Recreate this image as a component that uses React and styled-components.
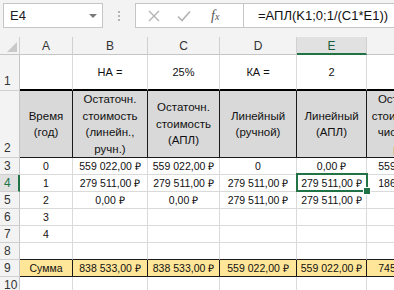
import React from "react";
import styled, { createGlobalStyle, css } from "styled-components";

const GlobalStyle = createGlobalStyle`
  html, body {
    margin: 0;
    padding: 0;
    width: 394px;
    height: 290px;
    overflow: hidden;
    background: #ffffff;
    font-family: "Liberation Sans", Arial, sans-serif;
  }
  * { box-sizing: border-box; }
`;

const Page = styled.div`
  width: 394px;
  height: 290px;
  overflow: hidden;
  display: flex;
  flex-direction: column;
`;

const FormulaBar = styled.div`
  height: 37px;
  flex: none;
  display: flex;
  align-items: flex-start;
  padding: 3px 0 0 3px;
  background: #f3f3f3;
`;

const NameBox = styled.div`
  width: 100px;
  height: 25px;
  background: #ffffff;
  border: 1px solid #c6c6c6;
  display: flex;
  align-items: center;
  justify-content: space-between;
  padding: 0 5px 0 6px;
  font-size: 13px;
  color: #222;
`;

const DropArrow = styled.span`
  width: 0;
  height: 0;
  border-left: 4px solid transparent;
  border-right: 4px solid transparent;
  border-top: 4px solid #7a7a7a;
`;

const Dots = styled.div`
  width: 32px;
  height: 25px;
  display: flex;
  flex-direction: column;
  align-items: center;
  justify-content: center;
  gap: 2px;
  & > span {
    width: 2px;
    height: 2px;
    background: #b5b5b5;
  }
`;

const FormulaBox = styled.div`
  flex: 1;
  height: 25px;
  background: #ffffff;
  border: 1px solid #c6c6c6;
  border-right: none;
  display: flex;
  align-items: center;
`;

const FxButtons = styled.div`
  width: 108px;
  height: 100%;
  display: flex;
  align-items: center;
  padding-left: 12px;
  gap: 17px;
  border-right: 1px solid #c6c6c6;
`;

const FxIcon = styled.span`
  font-family: "Liberation Serif", "Times New Roman", serif;
  font-style: italic;
  font-size: 14px;
  color: #555;
  margin-left: 3px;
  & > small {
    font-size: 10px;
  }
`;

const FormulaText = styled.div`
  padding-left: 14px;
  font-size: 13px;
  color: #111;
  white-space: nowrap;
`;

const Sheet = styled.div`
  display: grid;
  grid-template-columns: 20px 53px 75px 72px 77px 70px 85px;
  grid-template-rows: 18px 36px 67px repeat(8, 17px);
  width: 452px;
  font-size: 10.5px;
  color: #111;
`;

const Corner = styled.div`
  position: relative;
  background: #f3f3f3;
  border-right: 1px solid #d0d0d0;
  border-bottom: 1px solid #c6c6c6;
  display: flex;
  align-items: flex-end;
  justify-content: flex-end;
  padding: 0 2px 2px 0;
`;

const CornerTriangle = styled.span`
  width: 0;
  height: 0;
  border-left: 10px solid transparent;
  border-bottom: 10px solid #c9c9c9;
`;

const ColHeader = styled.div`
  background: ${(p) => (p.$selected ? "#e1e1e1" : "#f3f3f3")};
  border-right: 1px solid #d0d0d0;
  border-bottom: ${(p) => (p.$selected ? "2px solid #217346" : "1px solid #c6c6c6")};
  display: flex;
  align-items: center;
  justify-content: center;
  font-size: 12px;
  color: ${(p) => (p.$selected ? "#1d5e3a" : "#333")};
  padding-top: ${(p) => (p.$selected ? "1px" : "0")};
`;

const RowHeader = styled.div`
  background: ${(p) => (p.$selected ? "#e1e1e1" : "#f3f3f3")};
  border-right: ${(p) => (p.$selected ? "2px solid #217346" : "1px solid #c6c6c6")};
  border-bottom: 1px solid #d0d0d0;
  display: flex;
  align-items: ${(p) => (p.$tall ? "flex-end" : "center")};
  padding: ${(p) => (p.$tall ? "0 0 1px 4px" : "0 0 0 4px")};
  font-size: 12px;
  color: ${(p) => (p.$selected ? "#217346" : "#333")};
  line-height: 16px;
`;

const kinds = {
  plain: css`
    border-right: 1px solid #dadada;
    border-bottom: 1px solid #dadada;
  `,
  title: css`
    border-right: 1px solid #dadada;
    border-bottom: 2px solid #000;
    font-size: 11px;
  `,
  head: css`
    background: #d9d9d9;
    border-right: 1px solid #1a1a1a;
    border-bottom: 1px solid #1a1a1a;
    flex-direction: column;
    line-height: 16.5px;
    font-size: 11.5px;
  `,
  beforeSum: css`
    border-right: 1px solid #dadada;
    border-bottom: 1px solid #1a1a1a;
  `,
  sum: css`
    background: #ffe699;
    border-right: 1px solid #1a1a1a;
    border-bottom: 1px solid #1a1a1a;
  `,
};

const Cell = styled.div`
  position: relative;
  display: flex;
  align-items: center;
  justify-content: center;
  text-align: center;
  white-space: nowrap;
  overflow: ${(p) => (p.$selected ? "visible" : "hidden")};
  background: #ffffff;
  ${(p) => kinds[p.$kind || "plain"]}
  ${(p) =>
    p.$selected &&
    css`
      &::after {
        content: "";
        position: absolute;
        top: -2px;
        left: -1px;
        right: -2px;
        bottom: -1px;
        border: 2px solid #217346;
        z-index: 2;
      }
      &::before {
        content: "";
        position: absolute;
        right: -5px;
        bottom: -4px;
        width: 6px;
        height: 6px;
        background: #217346;
        border: 1px solid #ffffff;
        z-index: 3;
      }
    `}
`;

const Line = styled.span`
  display: block;
`;

const columns = ["A", "B", "C", "D", "E", "F"];

const rows = [
  { n: 1, kind: "title", tall: true, cells: ["", "НА =", "25%", "КА =", "2", ""] },
  {
    n: 2,
    kind: "head",
    tall: true,
    cells: [
      ["Время", "(год)"],
      ["Остаточн.", "стоимость", "(линейн.,", "ручн.)"],
      ["Остаточн.", "стоимость", "(АПЛ)"],
      ["Линейный", "(ручной)"],
      ["Линейный", "(АПЛ)"],
      ["Остаточная", "стоимость (по", "числам лет,", "ручн.)"],
    ],
  },
  { n: 3, cells: ["0", "559 022,00 ₽", "559 022,00 ₽", "0", "0,00 ₽", "559 022,00 ₽"] },
  {
    n: 4,
    selected: true,
    cells: ["1", "279 511,00 ₽", "279 511,00 ₽", "279 511,00 ₽", "279 511,00 ₽", "186 340,67 ₽"],
  },
  { n: 5, cells: ["2", "0,00 ₽", "0,00 ₽", "279 511,00 ₽", "279 511,00 ₽", ""] },
  { n: 6, cells: ["3", "", "", "", "", ""] },
  { n: 7, cells: ["4", "", "", "", "", ""] },
  { n: 8, kind: "beforeSum", cells: ["", "", "", "", "", ""] },
  {
    n: 9,
    kind: "sum",
    cells: ["Сумма", "838 533,00 ₽", "838 533,00 ₽", "559 022,00 ₽", "559 022,00 ₽", "745 362,67 ₽"],
  },
  { n: 10, cells: ["", "", "", "", "", ""] },
];

export default function App() {
  return (
    <Page>
      <GlobalStyle />
      <FormulaBar>
        <NameBox>
          <span>E4</span>
          <DropArrow />
        </NameBox>
        <Dots>
          <span />
          <span />
          <span />
        </Dots>
        <FormulaBox>
          <FxButtons>
            <svg width="12" height="12" viewBox="0 0 12 12">
              <path d="M1 1 L11 11 M11 1 L1 11" stroke="#b3b3b3" strokeWidth="1.4" fill="none" />
            </svg>
            <svg width="14" height="12" viewBox="0 0 14 12">
              <path d="M1 6.5 L5 10.5 L13 1.5" stroke="#b3b3b3" strokeWidth="1.6" fill="none" />
            </svg>
            <FxIcon>
              f<small>x</small>
            </FxIcon>
          </FxButtons>
          <FormulaText>=АПЛ(K1;0;1/(C1*E1))</FormulaText>
        </FormulaBox>
      </FormulaBar>
      <Sheet>
        <Corner>
          <CornerTriangle />
        </Corner>
        {columns.map((c) => (
          <ColHeader key={c} $selected={c === "E"}>
            {c}
          </ColHeader>
        ))}
        {rows.map((r) => (
          <React.Fragment key={r.n}>
            <RowHeader $tall={r.tall} $selected={r.selected}>
              {r.n}
            </RowHeader>
            {r.cells.map((v, i) => (
              <Cell
                key={i}
                $kind={r.kind}
                $selected={r.selected && columns[i] === "E"}
              >
                {Array.isArray(v) ? v.map((l, j) => <Line key={j}>{l}</Line>) : v}
              </Cell>
            ))}
          </React.Fragment>
        ))}
      </Sheet>
    </Page>
  );
}
